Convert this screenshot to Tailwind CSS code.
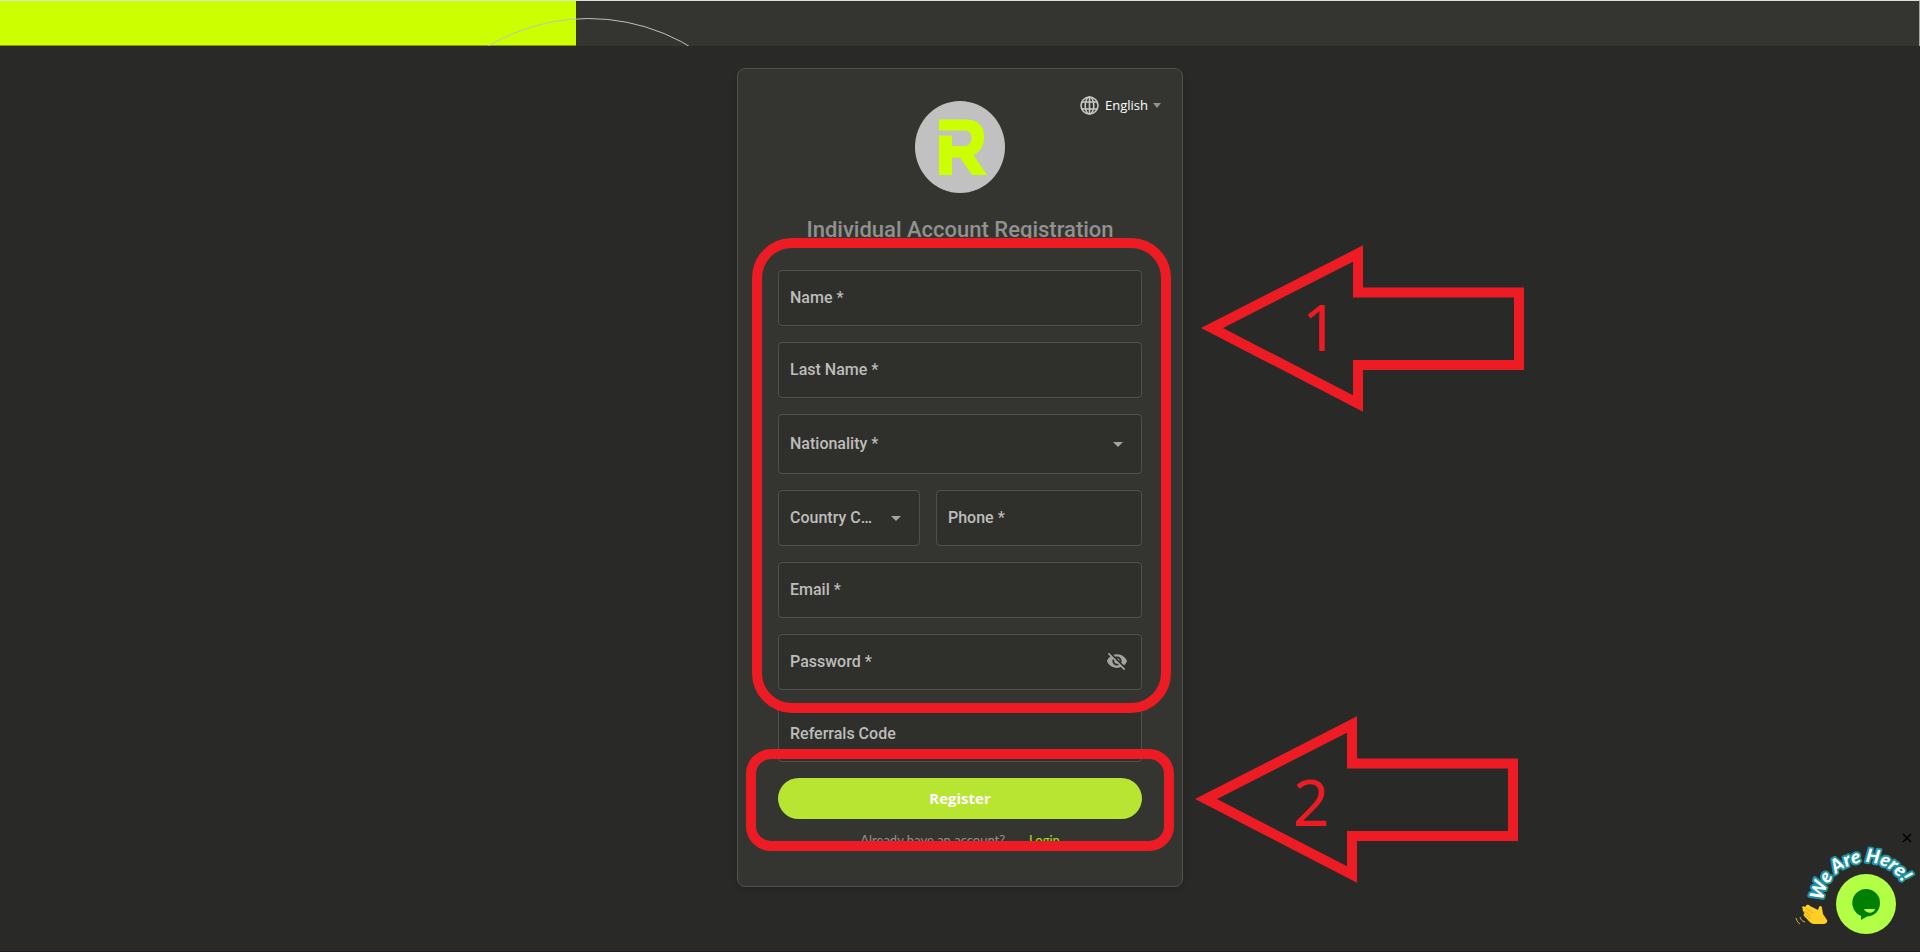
<!DOCTYPE html>
<html lang="en">
<head>
  <meta charset="UTF-8" />
  <meta name="viewport" content="width=device-width, initial-scale=1.0" />
  <title>Individual Account Registration</title>
  <script src="https://cdn.jsdelivr.net/npm/@tailwindcss/browser@4"></script>
</head>
<body class="relative flex min-h-screen flex-col overflow-x-hidden border-b border-[#211c21] bg-[#292928] font-['Roboto',sans-serif] text-[#bdbdbb]">

  <!-- Top banner -->
  <header class="relative flex h-[46px] border-r border-t border-r-[#a5a5a5] border-t-[#dededa] bg-[#343530]">
    <div class="w-[30%] border-b border-[#7f9c10] bg-[#ccff00]"></div>
    <svg class="absolute left-[480px] top-0 h-[45px] w-[220px]" viewBox="0 0 220 45" fill="none" stroke="#c0c0c0">
      <circle cx="108.500" cy="215" r="197.500" />
    </svg>
  </header>

  <!-- Registration card -->
  <main class="flex justify-center pt-[22px]">
    <div class="relative w-[446px] rounded-lg border border-[#50514d] bg-[#343530] px-10 pb-9 pt-8 shadow-md">

      <button type="button" class="absolute right-[21px] top-[26px] flex items-center gap-[6px] font-['Open_Sans',sans-serif] text-[13px] leading-5 text-white">
        <svg class="size-[19px]" viewBox="0 0 19 19" fill="none" stroke="#c8c8c5" stroke-width="1.600">
          <circle cx="9.500" cy="9.500" r="8.500" />
          <ellipse cx="9.500" cy="9.500" rx="4.300" ry="8.500" />
          <path d="M9.500 1v17M2 6h15M2 13h15" />
        </svg>
        English
        <svg class="-ml-px h-[5px] w-2 shrink-0" viewBox="0 0 8 5" fill="#91918e"><path d="M0 0h8L4 5z" /></svg>
      </button>

      <svg class="mx-auto h-[92px] w-[90px]" viewBox="0 0 90 92" role="img" aria-label="R logo">
        <ellipse cx="45" cy="46" rx="45" ry="46" fill="#c1c1c1" />
        <path fill="#ccff00" d="M24 18.500H51C63 18.500 69 25 69 35V37C69 45 65 51 58.500 54L72 74H57L45 56.500H37V74H24V34.500H37V45H49C54 45 56.500 42 56.500 37C56.500 32 54 29.500 49 29.500H24Z" />
      </svg>

      <h1 class="mt-[21px] text-center text-[22px] leading-8 font-medium text-[#91918e]">Individual Account Registration</h1>

      <form class="mt-6 flex flex-col gap-4">
        <input type="text" aria-label="Name" placeholder="Name *" class="h-14 w-full rounded border border-[#50514d] bg-[#2f2f2b] px-[11px] pb-[2px] font-medium placeholder:text-[#bdbdbb]" />
        <input type="text" aria-label="Last Name" placeholder="Last Name *" class="h-14 w-full rounded border border-[#50514d] bg-[#2f2f2b] px-[11px] pb-[2px] font-medium placeholder:text-[#bdbdbb]" />
        <div class="relative">
          <select aria-label="Nationality" class="h-[60px] w-full appearance-none rounded border border-[#50514d] bg-[#2f2f2b] px-[11px] font-medium">
            <option>Nationality *</option>
          </select>
          <svg class="pointer-events-none absolute right-[19px] top-[28px] h-[5px] w-[10px]" viewBox="0 0 10 5" fill="#a5a5a0"><path d="M0 0h10L5 5z" /></svg>
        </div>
        <div class="flex gap-4">
          <div class="relative w-[142px]">
            <select aria-label="Country Code" class="h-14 w-full appearance-none rounded border border-[#50514d] bg-[#2f2f2b] pl-[11px] pr-[40px] font-medium">
              <option>Country C…</option>
            </select>
            <svg class="pointer-events-none absolute right-[19px] top-[26px] h-[5px] w-[10px]" viewBox="0 0 10 5" fill="#a5a5a0"><path d="M0 0h10L5 5z" /></svg>
          </div>
          <input type="tel" aria-label="Phone" placeholder="Phone *" class="h-14 min-w-0 flex-1 rounded border border-[#50514d] bg-[#2f2f2b] px-[11px] pb-[2px] font-medium placeholder:text-[#bdbdbb]" />
        </div>
        <input type="email" aria-label="Email" placeholder="Email *" class="h-14 w-full rounded border border-[#50514d] bg-[#2f2f2b] px-[11px] pb-[2px] font-medium placeholder:text-[#bdbdbb]" />
        <div class="relative">
          <input type="password" aria-label="Password" placeholder="Password *" class="h-14 w-full rounded border border-[#50514d] bg-[#2f2f2b] px-[11px] pb-[2px] font-medium placeholder:text-[#bdbdbb]" />
          <button type="button" aria-label="Show password" class="absolute right-[14px] top-4">
            <svg class="size-[22px]" viewBox="0 0 24 24" fill="#a5a5a0"><path d="M12 7c2.760 0 5 2.240 5 5 0 .650-.130 1.260-.360 1.830l2.920 2.920c1.510-1.260 2.700-2.890 3.430-4.750-1.730-4.390-6-7.500-11-7.500-1.400 0-2.740.250-3.980.700l2.160 2.160C10.740 7.130 11.350 7 12 7zM2 4.270l2.280 2.280.460.460C3.080 8.300 1.780 10.020 1 12c1.730 4.390 6 7.500 11 7.500 1.550 0 3.030-.300 4.380-.840l.420.420L19.730 22 21 20.730 3.270 3 2 4.270zM7.530 9.800l1.550 1.550c-.050.210-.080.430-.080.650 0 1.660 1.340 3 3 3 .220 0 .440-.030.650-.080l1.550 1.550c-.670.330-1.410.530-2.200.530-2.760 0-5-2.240-5-5 0-.790.200-1.530.530-2.200zm4.310-.780l3.150 3.150.020-.160c0-1.660-1.340-3-3-3l-.170.010z" /></svg>
          </button>
        </div>
        <input type="text" aria-label="Referrals Code" placeholder="Referrals Code" class="h-14 w-full rounded border border-[#50514d] bg-[#2f2f2b] px-[11px] pb-[2px] font-medium placeholder:text-[#bdbdbb]" />
        <button type="submit" class="h-[41px] rounded-full bg-[#b8e532] pb-px font-['Open_Sans',sans-serif] text-[15px] font-bold text-white">Register</button>
      </form>

      <p class="mt-[11px] flex justify-center gap-6 font-['Lato',sans-serif] text-[13px] leading-5 text-[#91918e]">
        Already have an account?
        <a href="#" class="text-[#9be815]">Login</a>
      </p>
    </div>
  </main>

  <!-- Step markers -->
  <div class="pointer-events-none absolute left-1/2 top-0">
    <div class="absolute -left-[208px] top-[238px] h-[475px] w-[419px] rounded-[40px] border-10 border-[#ed1c24]"></div>
    <div class="absolute -left-[214px] top-[749px] h-[102px] w-[428px] rounded-[25px] border-10 border-[#ed1c24]"></div>
    <svg class="absolute left-[241px] top-[245px] h-[168px] w-[324px]" viewBox="0 0 324 168" fill="none" stroke="#ed1c24" stroke-width="10">
      <path d="M11 83L157 8.500V47.500H318V120H157V158.500Z" />
      <text x="101" y="106" fill="#ed1c24" stroke="none" font-size="64" font-family="Noto Sans, sans-serif">1</text>
    </svg>
    <svg class="absolute left-[235px] top-[716px] h-[168px] w-[324px]" viewBox="0 0 324 168" fill="none" stroke="#ed1c24" stroke-width="10">
      <path d="M11 83L157 8.500V47.500H318V120H157V158.500Z" />
      <text x="98" y="110" fill="#ed1c24" stroke="none" font-size="64" font-family="Noto Sans, sans-serif">2</text>
    </svg>
  </div>

  <!-- Chat widget -->
  <div class="absolute right-0 top-[820px] h-[131px] w-[140px]">
    <button type="button" aria-label="Close chat" class="absolute right-2 top-[13px]">
      <svg class="size-[10px]" viewBox="0 0 10 10" stroke="#000" stroke-width="1.500"><path d="M1 1l8 8M9 1L1 9" /></svg>
    </button>
    <svg class="absolute inset-0 h-[131px] w-[140px]" viewBox="0 0 140 131">
      <defs><path id="arc" d="M43 81A43 43 0 0 1 126 70" /></defs>
      <text font-family="Lato, sans-serif" font-size="19" font-weight="900" font-style="italic" fill="#fff" stroke="#1d93a3" stroke-width="4" stroke-linejoin="round" paint-order="stroke"><textPath href="#arc">We Are Here!</textPath></text>
      <!-- waving hand -->
      <path fill="#ffcf26" d="M22 88c0-2 2-2 3-1l1-1c1-2 3-1 4 0l8 4 1-3c1-2 3-1 3 1l1 6 4 6c1 2-1 4-4 4H34c-3 0-5-3-7-5l-3-3c-1-2 0-3 1-2l-2-3c-1-2 0-3 1-2z" />
      <path fill="none" stroke="#e09b1c" stroke-width="0.800" d="M26 88l7 5M24 91l7 5M25 95l6 4" />
      <path fill="none" stroke="#d9b13b" stroke-width="1" d="M20 97c1 3 2 4 5 5M16 98c1 3 2 5 4 6" />
    </svg>
    <button type="button" aria-label="Open chat" class="absolute left-14 top-[54px]">
      <svg class="size-[60px]" viewBox="0 0 60 60">
        <circle cx="30" cy="30" r="30" fill="#b2ff45" />
        <path fill="#008000" d="M30 15a14 14 0 0 1 14 14c0 8-6 13.500-13 13.500L25 46V42a14 14 0 0 1 5-27z" />
        <path fill="#b2ff45" d="M28 35h11c-1 5-9 5-11 0z" />
      </svg>
    </button>
  </div>

</body>
</html>
